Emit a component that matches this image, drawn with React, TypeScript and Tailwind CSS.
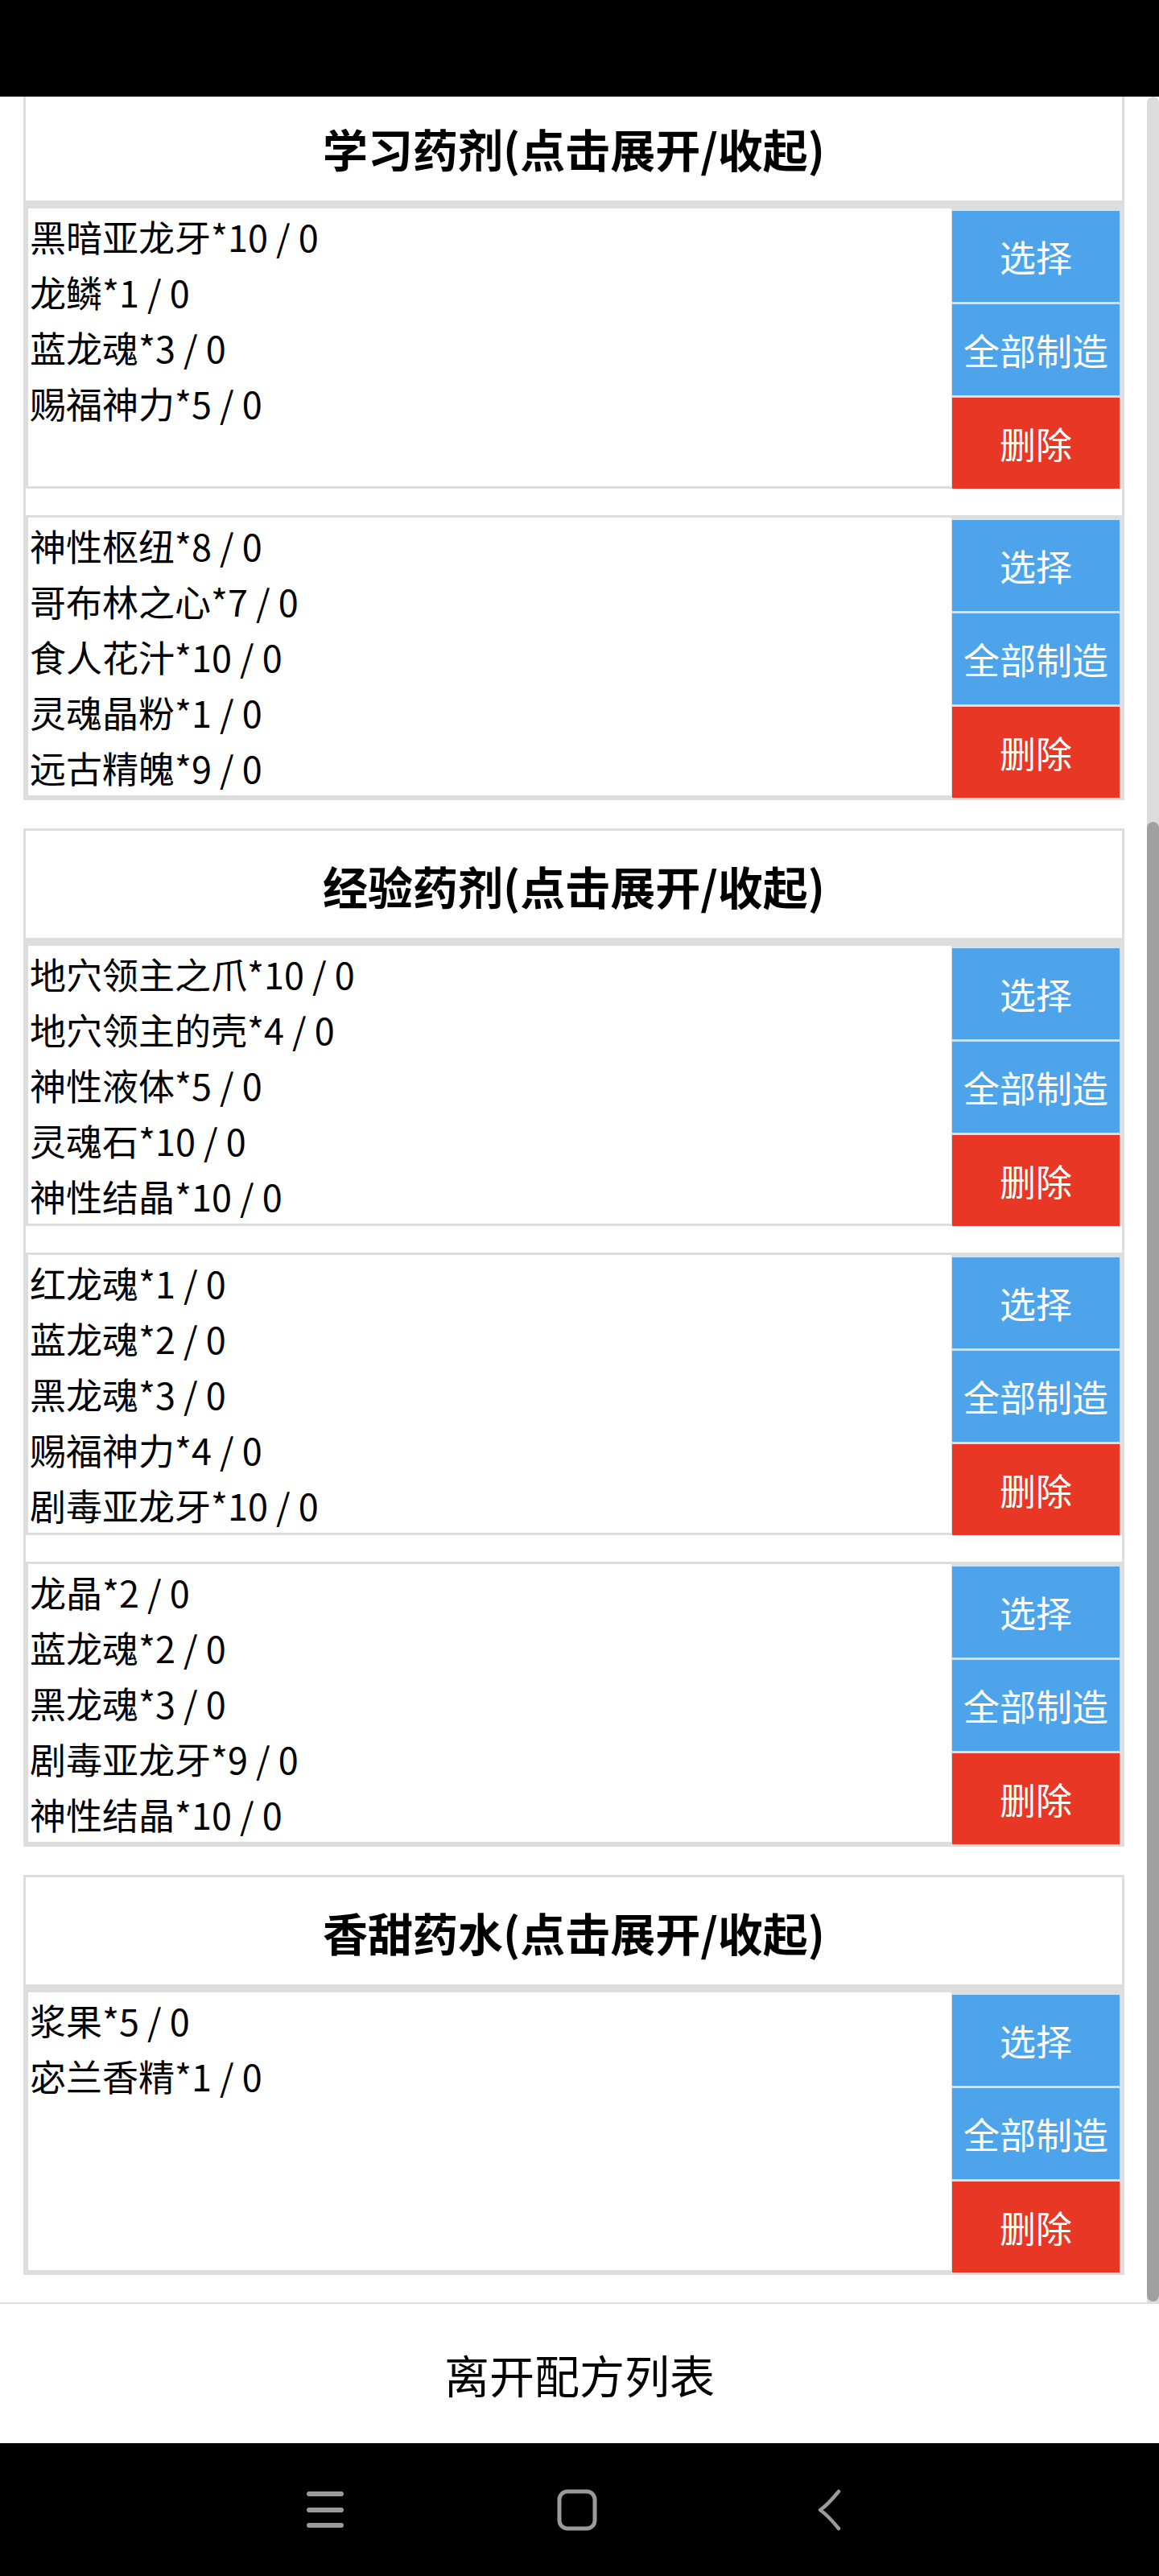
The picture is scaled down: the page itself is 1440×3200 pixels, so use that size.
import React from 'react';

type Recipe = string[];

const sections: { title: string; recipes: Recipe[] }[] = [
  {
    title: '学习药剂(点击展开/收起)',
    recipes: [
      ['黑暗亚龙牙*10 / 0', '龙鳞*1 / 0', '蓝龙魂*3 / 0', '赐福神力*5 / 0'],
      ['神性枢纽*8 / 0', '哥布林之心*7 / 0', '食人花汁*10 / 0', '灵魂晶粉*1 / 0', '远古精魄*9 / 0'],
    ],
  },
  {
    title: '经验药剂(点击展开/收起)',
    recipes: [
      ['地穴领主之爪*10 / 0', '地穴领主的壳*4 / 0', '神性液体*5 / 0', '灵魂石*10 / 0', '神性结晶*10 / 0'],
      ['红龙魂*1 / 0', '蓝龙魂*2 / 0', '黑龙魂*3 / 0', '赐福神力*4 / 0', '剧毒亚龙牙*10 / 0'],
      ['龙晶*2 / 0', '蓝龙魂*2 / 0', '黑龙魂*3 / 0', '剧毒亚龙牙*9 / 0', '神性结晶*10 / 0'],
    ],
  },
  {
    title: '香甜药水(点击展开/收起)',
    recipes: [['浆果*5 / 0', '宓兰香精*1 / 0']],
  },
];

const RecipeRow: React.FC<{ items: Recipe; last: boolean }> = ({ items, last }) => (
  <div className={`flex border-t-[3px] border-[#dddddd] ${last ? '' : 'mb-[33px]'}`}>
    <div className="flex-1 border-l-[3px] border-b-[3px] border-r border-[#dddddd] pl-[2px] text-[45px] leading-[69px] text-black">
      {items.map((t, i) => (
        <div key={i}>{t}</div>
      ))}
    </div>
    <div className="w-[211px] flex flex-col gap-[3px] pt-[3px] pr-[3px] bg-[#dddddd]">
      <button className="h-[113px] flex items-center justify-center bg-[#4ea4ea] text-white text-[45px]">选择</button>
      <button className="h-[113px] flex items-center justify-center bg-[#4ea4ea] text-white text-[45px]">全部制造</button>
      <button className="h-[113px] flex items-center justify-center bg-[#e93726] text-white text-[45px]">删除</button>
    </div>
  </div>
);

const App: React.FC = () => {
  return (
    <div className="w-[1440px] h-[3200px] bg-white flex flex-col font-['Noto_Sans_CJK_SC','Noto_Sans',sans-serif]">
      {/* status bar */}
      <div className="h-[120px] bg-black shrink-0"></div>

      {/* scrolling list */}
      <div className="relative h-[2740px] overflow-hidden shrink-0">
        <div className="mt-[-7px] pl-[29px] pr-[43px]">
          {sections.map((s, si) => (
            <div key={si} className="border-[3px] border-[#dddddd] bg-white mb-[35px]">
              <div className="h-[140px] flex items-center justify-center border-b-[7px] border-[#dddddd] pt-[2px] text-[56px] font-bold text-black">
                {s.title}
              </div>
              {s.recipes.map((r, ri) => (
                <RecipeRow key={ri} items={r} last={ri === s.recipes.length - 1} />
              ))}
            </div>
          ))}
        </div>

        {/* scrollbar */}
        <div className="absolute right-0 top-0 w-[15px] h-full bg-[#dcdcdc] rounded-t-[8px]"></div>
        <div className="absolute right-0 top-[901px] w-[15px] h-[1838px] bg-[#a0a0a0] rounded-[8px]"></div>
      </div>

      {/* footer */}
      <div className="h-[175px] shrink-0 border-t-2 border-[#dddddd] flex items-center justify-center text-[56px] text-black">
        离开配方列表
      </div>

      {/* nav bar */}
      <div className="h-[165px] shrink-0 bg-black flex items-center justify-center pr-[6px]">
        <div className="w-[313px] flex justify-center">
          <svg width="46" height="50" viewBox="0 0 46 50">
            <rect x="0" y="2" width="46" height="6" rx="3" fill="#9a9a9a" />
            <rect x="0" y="22" width="46" height="6" rx="3" fill="#9a9a9a" />
            <rect x="0" y="41" width="46" height="6" rx="3" fill="#9a9a9a" />
          </svg>
        </div>
        <div className="w-[313px] flex justify-center">
          <svg width="50" height="52" viewBox="0 0 50 52">
            <rect x="3" y="3" width="44" height="46" rx="10" fill="none" stroke="#9a9a9a" strokeWidth="5" />
          </svg>
        </div>
        <div className="w-[313px] flex justify-center">
          <svg width="32" height="52" viewBox="0 0 32 52">
            <path d="M28 3 Q 14 20 5 26 Q 14 32 28 49" fill="none" stroke="#9a9a9a" strokeWidth="4.5" strokeLinecap="round" strokeLinejoin="round" />
          </svg>
        </div>
      </div>
    </div>
  );
};

export default App;
